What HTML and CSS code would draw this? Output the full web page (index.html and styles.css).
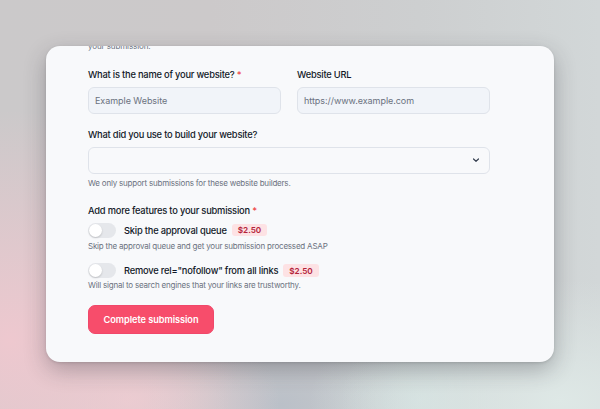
FILE: index.html
```html
<!DOCTYPE html>
<html lang="en">
<head>
<meta charset="utf-8">
<title>Submit website</title>
<link rel="stylesheet" href="styles.css">
</head>
<body>
<div class="backdrop">
  <div class="card">
    <div class="content">
      <p class="intro">your submission.</p>
      <div class="row two">
        <div class="field">
          <label class="label">What is the name of your website? <span class="req">*</span></label>
          <div class="input placeholder">Example Website</div>
        </div>
        <div class="field">
          <label class="label">Website URL</label>
          <div class="input placeholder">https://www.example.com</div>
        </div>
      </div>
      <div class="field build">
        <label class="label">What did you use to build your website?</label>
        <div class="input select">
          <svg class="chev" width="8" height="8" viewBox="0 0 8 8"><path d="M1.5 3 L4 5.3 L6.5 3" fill="none" stroke="#374151" stroke-width="1.2" stroke-linecap="round" stroke-linejoin="round"/></svg>
        </div>
        <p class="help">We only support submissions for these website builders.</p>
      </div>
      <div class="features">
        <div class="label">Add more features to your submission <span class="req">*</span></div>
        <div class="option first">
          <span class="toggle"><span class="knob"></span></span>
          <span class="opt-label">Skip the approval queue</span>
          <span class="badge">$2.50</span>
        </div>
        <p class="help">Skip the approval queue and get your submission processed ASAP</p>
        <div class="option">
          <span class="toggle"><span class="knob"></span></span>
          <span class="opt-label">Remove rel="nofollow" from all links</span>
          <span class="badge">$2.50</span>
        </div>
        <p class="help last">Will signal to search engines that your links are trustworthy.</p>
      </div>
      <button class="submit">Complete submission</button>
    </div>
  </div>
</div>
</body>
</html>
```
FILE: styles.css
```css
* { box-sizing: border-box; }
html, body { margin: 0; padding: 0; }
body {
  width: 600px;
  height: 409px;
  overflow: hidden;
  font-family: Inter, "Noto Sans", sans-serif;
}
.backdrop {
  width: 600px;
  height: 409px;
  padding: 46px 0 0 46px;
  background:
    radial-gradient(ellipse 230px 230px at 10px 340px, rgba(238,200,207,1), rgba(238,200,207,0) 100%),
    radial-gradient(ellipse 150px 90px at 130px 400px, rgba(236,206,211,0.9), rgba(236,206,211,0) 100%),
    radial-gradient(ellipse 220px 120px at 560px 400px, rgba(222,232,230,1), rgba(222,232,230,0) 100%),
    radial-gradient(ellipse 110px 80px at 420px 400px, rgba(210,225,224,0.9), rgba(210,225,224,0) 100%),
    radial-gradient(ellipse 140px 80px at 280px 405px, rgba(186,192,200,1), rgba(186,192,200,0) 100%),
    linear-gradient(90deg, #cbc9ca 0%, #ccc9ca 35%, #cdcfd0 70%, #d2d7d8 100%);
}
.card {
  width: 508px;
  height: 316px;
  background: #f8f9fb;
  border-radius: 14px;
  overflow: hidden;
  box-shadow: 0 8px 22px rgba(40,40,50,0.3), 0 1px 3px rgba(0,0,0,0.12);
}
.content {
  width: 444px;
  padding-left: 42px;
  margin-top: -6px;
}
.intro {
  margin: 0;
  font-size: 8px;
  line-height: 12px;
  letter-spacing: -0.1px;
  color: #6b7280;
}
.row.two {
  display: grid;
  grid-template-columns: 193px 193px;
  column-gap: 16px;
  margin-top: 15.5px;
}
.field { display: flex; flex-direction: column; }
.label {
  font-size: 9.3px;
  line-height: 14px;
  font-weight: 500;
  letter-spacing: -0.2px;
  color: #111827;
}
.req { color: #ef4444; }
.input {
  margin-top: 5.5px;
  height: 26.5px;
  border: 1px solid #dfe3ea;
  background: #f1f4f9;
  border-radius: 6px;
  display: flex;
  align-items: center;
  padding: 0 6px;
  font-size: 9px;
  letter-spacing: -0.05px;
  color: #6b7280;
}
.field.build { margin-top: 14.5px; width: 402px; }
.select {
  justify-content: flex-end;
  background: #f8f9fb;
  padding-right: 9px;
  margin-top: 4.5px;
  height: 27px;
}
.chev { display: block; }
.help {
  margin: 4px 0 0;
  font-size: 8px;
  line-height: 11px;
  letter-spacing: -0.2px;
  color: #6b7280;
}
.features { margin-top: 15.5px; }
.option {
  display: flex;
  align-items: center;
  height: 15px;
  margin-top: 11.5px;
}
.option.first { margin-top: 4.5px; }
.toggle {
  width: 28px;
  height: 15px;
  border-radius: 8px;
  background: #e5e7eb;
  position: relative;
  flex: none;
}
.knob {
  position: absolute;
  left: 1px;
  top: 1px;
  width: 13px;
  height: 13px;
  border-radius: 50%;
  background: #fff;
  box-shadow: 0 1px 2px rgba(0,0,0,0.18);
}
.opt-label {
  margin-left: 8px;
  font-size: 9.3px;
  font-weight: 500;
  letter-spacing: -0.2px;
  color: #111827;
}
.badge {
  margin-left: 5px;
  height: 12.5px;
  padding: 0 6px;
  border-radius: 3px;
  background: #fde2e4;
  color: #b4233a;
  font-size: 8.2px;
  font-weight: 600;
  display: inline-flex;
  align-items: center;
}
.option + .help { margin-top: 3px; }
.option + .help.last { margin-top: 1.5px; }
.submit {
  margin-top: 14px;
  width: 126px;
  height: 29px;
  border: 1px solid #f0486a;
  border-radius: 7px;
  background: #f74d6b;
  color: #fff;
  font-family: Inter, sans-serif;
  font-size: 9.2px;
  font-weight: 600;
  letter-spacing: -0.05px;
  padding: 0;
  display: block;
}
```
